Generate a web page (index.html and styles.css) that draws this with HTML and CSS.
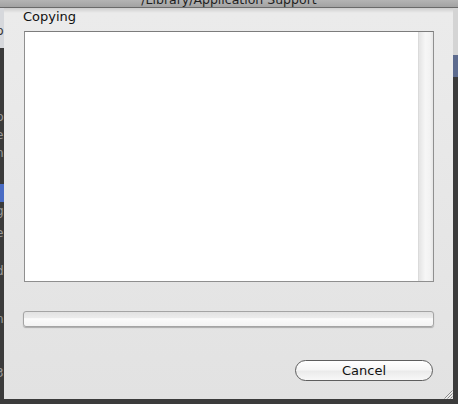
FILE: index.html
```html
<!DOCTYPE html>
<html>
<head>
<meta charset="utf-8">
<link rel="stylesheet" href="styles.css">
</head>
<body>
<div class="screen">
  <div class="titlebar"><span class="title">/Library/Application Support</span></div>
  <div class="middle">
    <div class="side side-left">
      <div class="seg light h40"><span class="frag dark-t">p</span></div>
      <div class="seg h60"></div>
      <div class="seg h18"><span class="frag">p</span></div>
      <div class="seg h18"><span class="frag">e</span></div>
      <div class="seg h22"><span class="frag">n</span></div>
      <div class="seg h18"></div>
      <div class="seg blue h18"><span class="frag white">i</span></div>
      <div class="seg h22"><span class="frag">g</span></div>
      <div class="seg h24"><span class="frag">e</span></div>
      <div class="seg h14"></div>
      <div class="seg h20"><span class="frag">d</span></div>
      <div class="seg h28"></div>
      <div class="seg h20"><span class="frag">n</span></div>
      <div class="seg h34"></div>
      <div class="seg h20"><span class="frag">3</span></div>
    </div>
    <div class="panel">
      <div class="label">Copying</div>
      <div class="textbox">
        <div class="textarea"></div>
        <div class="track"></div>
      </div>
      <div class="progress"></div>
      <button class="cancel">Cancel</button>
      <svg class="grip" width="10" height="10" viewBox="0 0 10 10">
        <path d="M9.5 1.5 L1.5 9.5 M9.5 4.5 L4.5 9.5 M9.5 7.5 L7.5 9.5" stroke="#8a8a8a" stroke-width="1" fill="none"/>
        <path d="M9.5 2.5 L2.5 9.5 M9.5 5.5 L5.5 9.5" stroke="#f4f4f4" stroke-width="0.8" fill="none"/>
      </svg>
    </div>
    <div class="side side-right">
      <div class="seg lightr h47"></div>
      <div class="seg blue2 h22"></div>
    </div>
  </div>
  <div class="bottom"></div>
</div>
</body>
</html>
```
FILE: styles.css
```css
html, body {
  margin: 0;
  padding: 0;
  background: #3b3b3b;
}
.screen {
  width: 458px;
  height: 404px;
  display: flex;
  flex-direction: column;
  overflow: hidden;
  font-family: "DejaVu Sans", "Liberation Sans", sans-serif;
}
.titlebar {
  height: 7px;
  flex: none;
  overflow: hidden;
  background: linear-gradient(#b4b4b4, #a2a2a2);
  border-bottom: 1px solid #6a6a6a;
  text-align: center;
}
.title {
  display: block;
  font-size: 12.5px;
  line-height: 13px;
  margin-top: -7px;
  color: #1e1e1e;
}
.middle {
  display: flex;
  height: 391px;
  flex: none;
}
.side {
  flex: none;
  display: flex;
  flex-direction: column;
  overflow: hidden;
}
.side-left { width: 4px; }
.side-right { width: 5px; }
.seg {
  flex: none;
  overflow: hidden;
}
.light { background: #d6d8dc; }
.lightr { background: #d4d4d4; }
.blue { background: #4a6cc4; }
.blue2 { background: #5d6b8e; }
.h14 { height: 14px; }
.h18 { height: 18px; }
.h20 { height: 20px; }
.h22 { height: 22px; }
.h24 { height: 24px; }
.h28 { height: 28px; }
.h34 { height: 34px; }
.h40 { height: 40px; }
.h47 { height: 47px; }
.h60 { height: 60px; }
.frag {
  display: block;
  font-size: 12px;
  line-height: 18px;
  margin-left: -4px;
  color: #9a9a9a;
}
.frag.white { color: #e8ecff; }
.frag.dark-t { color: #333; margin-top: 14px; }
.panel {
  flex: 1;
  display: flex;
  flex-direction: column;
  background: linear-gradient(#cdcdcd 0, #ebebeb 5px, #eaeaea 60px, #e2e2e2 100%);
}
.label {
  font-size: 13px;
  line-height: 16px;
  color: #111;
  margin: 1px 0 0 19px;
}
.textbox {
  margin: 6px 0 0 20px;
  width: 408px;
  height: 249px;
  border: 1px solid #8f8f8f;
  border-top-color: #7c7c7c;
  display: flex;
  background: #fff;
}
.textarea {
  flex: 1;
  background: #fff;
}
.track {
  width: 14px;
  background: linear-gradient(to right, #e4e4e4, #f6f6f6 45%, #f2f2f2 80%, #e6e6e6);
  border-left: 1px solid #dadada;
}
.progress {
  margin: 29px 0 0 19px;
  width: 409px;
  height: 14px;
  border: 1px solid #a4a4a4;
  border-radius: 3px;
  background: linear-gradient(#e2e2e2 0, #ebebeb 40%, #fbfbfb 48%, #f3f3f3 100%);
  box-shadow: 0 1px 1px rgba(0,0,0,0.25);
}
.cancel {
  align-self: flex-end;
  margin: 33px 20px 0 0;
  width: 138px;
  height: 21px;
  padding: 0;
  border: 1px solid #5e5e5e;
  border-radius: 11px;
  background: linear-gradient(#ffffff 0, #f6f6f6 45%, #ebebeb 55%, #f8f8f8 100%);
  font-family: "DejaVu Sans", "Liberation Sans", sans-serif;
  font-size: 13px;
  line-height: 18px;
  color: #111;
}
.grip {
  align-self: flex-end;
  margin: auto 0 0 0;
  display: block;
}
.bottom {
  flex: 1;
  background: #3b3b3b;
}
```
